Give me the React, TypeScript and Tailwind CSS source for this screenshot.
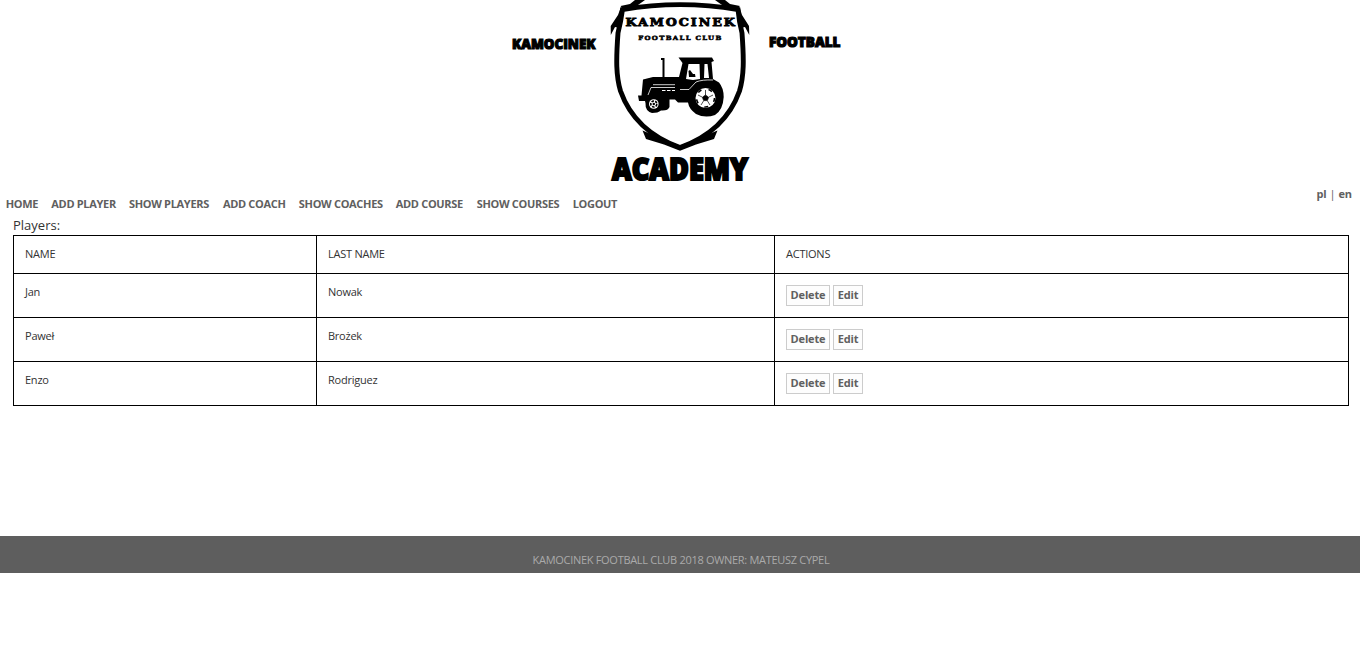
const navItems = [
  { label: 'HOME', width: 'w-[32.4px]' },
  { label: 'ADD PLAYER', width: 'w-[64.4px]' },
  { label: 'SHOW PLAYERS', width: 'w-[80.7px]' },
  { label: 'ADD COACH', width: 'w-[62.7px]' },
  { label: 'SHOW COACHES', width: 'w-[83.7px]' },
  { label: 'ADD COURSE', width: 'w-[67.7px]' },
  { label: 'SHOW COURSES', width: 'w-[82.7px]' },
  { label: 'LOGOUT', width: 'w-[45px]' },
];

const players = [
  { name: 'Jan', lastName: 'Nowak' },
  { name: 'Paweł', lastName: 'Brożek' },
  { name: 'Enzo', lastName: 'Rodriguez' },
];

function Shield() {
  return (
    <g>
      <path
        d="M622.5 9.5 Q680 -.2 738 9.5 Q739 21 742 33 C744 60 744 76 739.5 91 C731 115 712 136 680 147.5 C648 136 629 115 620.5 91 C616 76 616 60 618 33 Q621 21 622.5 9.5Z"
        fill="none"
        stroke="#000"
        strokeWidth="4.9"
      />
      <path d="M620.5 6 L630 4 L635 0 H645 L638 5 L625 11Z M740 6 L730 4 L725 0 H715 L722 5 L735 11Z" />
      <path d="M621 7 L618 15 L610.7 26 L610.8 35 L615 27 L620 28Z M739.5 7 L742 15 L749 26 L749.3 35 L745 27 L740 28Z" />
      <path d="M642.5 130.5 L646 139 L664 144.5 L680 150.8 L696 144.5 L714 139 L717.5 130.5 L702 137 L680 145.5 L658 137Z" />
    </g>
  );
}

function Tractor() {
  return (
    <g>
      <path d="M661 58 H664.5 V77 H679 L682.5 63 L678.5 57.5 H712 L714 61 L711.5 62 L713 79 L719 82.5 Q723.7 88 723.7 97 Q723 110 715 115 Q705 118.5 696 114 Q689 109 688 102.5 H678 L675 99.5 H669.5 V107 Q668 111 661 110.5 Q658 113 652 113 Q645 111 645.5 103 L645 101 H639 L638 95.5 H641.5 L643 79.5 L653 77 H662.5 V60 H661Z" />
      <path d="M688.5 64 H699.5 L700 79 L693 80 L686 79Z M704.5 64 H707.5 L709 78 H704Z" fill="#fff" />
      <path d="M688.5 71 L690 70 L693 74 L695 74 L695.5 77 H689Z" />
      <path d="M648 95 L651 87.5 H675 M653 84.7 H675 M680 89.5 H689 L696 82 Q702 79.5 713 80" fill="none" stroke="#fff" strokeWidth=".8" />
      <path d="M662 90.5 H675" stroke="#fff" strokeWidth="1.2" strokeDasharray="3.5 1.5" />
      <circle cx="653.8" cy="104" r="4.8" fill="#fff" />
      <circle cx="653.8" cy="104" r="3" fill="none" stroke="#000" strokeWidth="1.6" strokeDasharray="2.6 1.2" />
      <circle cx="653.8" cy="104" r="1.2" />
      <circle cx="705.5" cy="98" r="10" fill="#fff" />
      <circle cx="705.5" cy="98" r="9" fill="none" stroke="#000" strokeWidth="1.6" strokeDasharray="4 7.3" />
      <path d="M705.5 95 L708.6 97.2 L707.4 100.6 H703.6 L702.4 97.2Z M705.5 95 V90 M709 97 L713 95 M707.5 101 L710 105 M703.5 101 L701 105 M702 97 L698 95" stroke="#000" strokeWidth=".7" />
    </g>
  );
}

function Logo() {
  return (
    <svg width="360" height="188" viewBox="500 0 360 188" className="block" role="img" aria-label="Kamocinek Football Academy">
      <Shield />
      <Tractor />
      <g fontFamily="'DejaVu Serif', serif" fontWeight="700" stroke="#000">
        <text transform="translate(625.5 25.6) scale(1.2 1)" fontSize="10.6" strokeWidth=".8" textLength="91.2" lengthAdjust="spacing">KAMOCINEK</text>
        <text transform="translate(638.3 40.4) scale(1.2 1)" fontSize="5.8" strokeWidth=".5" textLength="69.2" lengthAdjust="spacing">FOOTBALL CLUB</text>
      </g>
      <g fontFamily="'Open Sans', sans-serif" fontWeight="800" stroke="#000" strokeLinejoin="miter">
        <text x="512" y="48.5" fontSize="14.6" strokeWidth="1.2" textLength="83.5" lengthAdjust="spacingAndGlyphs">KAMOCINEK</text>
        <text x="769" y="46.8" fontSize="14.2" strokeWidth="1.2" textLength="71.5" lengthAdjust="spacingAndGlyphs">FOOTBALL</text>
        <text x="612" y="180" fontSize="29.2" strokeWidth="2" textLength="136" lengthAdjust="spacingAndGlyphs">ACADEMY</text>
      </g>
    </svg>
  );
}

function ActionButton({ label, width }: { label: string; width: string }) {
  return (
    <button className={`h-[21px] border border-[#ccc] bg-[#fdfdfd] pb-[2px] text-center text-[11px] leading-[17px] font-bold tracking-[-0.15px] text-[#606060] ${width}`}>
      {label}
    </button>
  );
}

export default function App() {
  return (
    <div className="min-h-[650px] bg-white font-['Open_Sans',sans-serif] text-[11px] leading-[15px] text-[#333]">
      <header className="flex h-[187px] justify-center">
        <Logo />
      </header>
      <div className="flex h-[29px] justify-between pr-[8px] pl-[5.7px] font-bold text-[#606060]">
        <nav className="flex gap-[13.25px] pt-[9px]">
          {navItems.map((item) => (
            <a key={item.label} href="#" className={`whitespace-nowrap tracking-[-0.32px] ${item.width}`}>
              {item.label}
            </a>
          ))}
        </nav>
        <div className="flex gap-[3px] leading-[13px] tracking-[-0.1px]">
          <a href="#">pl</a>
          <span className="font-normal">|</span>
          <a href="#">en</a>
        </div>
      </div>
      <main className="h-[320px] pr-[11px] pl-[13px]">
        <h1 className="h-[19px] text-[13px] leading-[18px]">Players:</h1>
        <table className="w-[1336px] table-fixed border-collapse tracking-[-0.24px]">
          <colgroup>
            <col className="w-[303px]" />
            <col className="w-[458px]" />
            <col />
          </colgroup>
          <thead>
            <tr className="h-[38px]">
              {['NAME', 'LAST NAME', 'ACTIONS'].map((heading) => (
                <th key={heading} className="border border-black px-[11px] pt-[10px] pb-[11px] text-left align-top font-normal">
                  {heading}
                </th>
              ))}
            </tr>
          </thead>
          <tbody>
            {players.map((player) => (
              <tr key={player.lastName} className="h-[44px]">
                <td className="border border-black px-[11px] pt-[10px] align-top">{player.name}</td>
                <td className="border border-black px-[11px] pt-[10px] align-top">{player.lastName}</td>
                <td className="border border-black px-[11px] pt-[11px] align-top">
                  <div className="flex gap-[3px] tracking-normal">
                    <ActionButton label="Delete" width="w-[44px]" />
                    <ActionButton label="Edit" width="w-[30px]" />
                  </div>
                </td>
              </tr>
            ))}
          </tbody>
        </table>
      </main>
      <footer className="h-[37px] bg-[#5e5e5e] pt-[16px] pl-[2px] text-center tracking-[-0.3px] text-[#aaa]">
        KAMOCINEK FOOTBALL CLUB 2018 OWNER: MATEUSZ CYPEL
      </footer>
    </div>
  );
}
